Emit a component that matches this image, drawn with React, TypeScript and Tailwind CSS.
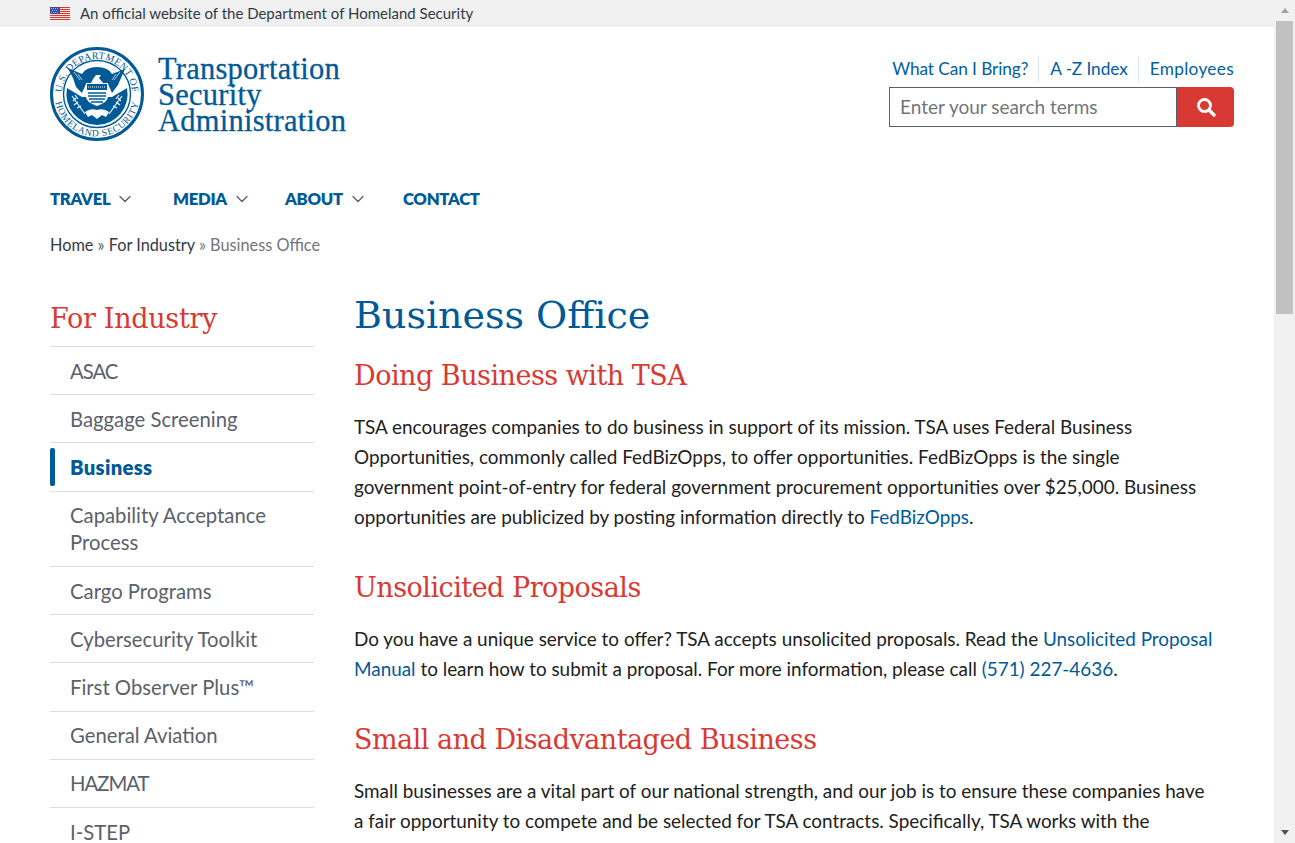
import { ChevronDown } from "lucide-react";

const sans = "font-['Lato','Noto_Sans',sans-serif]";
const serif = "font-['DejaVu_Serif','Liberation_Serif',serif]";

const sideItems = [
  { label: "ASAC", tight: true },
  { label: "Baggage Screening" },
  { label: "Business", active: true },
  { label: "Capability Acceptance Process" },
  { label: "Cargo Programs" },
  { label: "Cybersecurity Toolkit" },
  { label: "First Observer Plus™" },
  { label: "General Aviation" },
  { label: "HAZMAT", tight: true },
  { label: "I-STEP" },
];

const h2Class = `${serif} text-[27px] leading-[36px] tracking-[-0.5px] text-[#d83933]`;

const FlagIcon = () => (
  <svg width="20" height="13" viewBox="0 0 20 13" className="shrink-0">
    <rect width="20" height="13" fill="#fbe3e0" />
    <path d="M0 .5h20M0 2.5h20M0 4.5h20M0 6.5h20M0 8.5h20M0 10.5h20M0 12.5h20" stroke="#d83933" strokeWidth="1" />
    <rect width="10" height="7" fill="#3c4a9e" />
    <path d="M1 1.5h8M2 3.5h6M1 5.5h8" stroke="#c5cbe8" strokeWidth="0.8" strokeDasharray="1 1" />
  </svg>
);

const Seal = () => (
  <svg width="94" height="94" viewBox="0 0 94 94" className="shrink-0">
    <defs>
      <path id="sealTop" d="M12 47 A35 35 0 1 1 82 47" />
      <path id="sealBottom" d="M4.5 47 A42.5 42.5 0 0 0 89.5 47" />
    </defs>
    <circle cx="47" cy="47" r="45.5" fill="#fff" stroke="#005a97" strokeWidth="3" />
    <circle cx="47" cy="47" r="33.5" fill="#fff" stroke="#005a97" strokeWidth="1.4" />
    <text fontFamily="Liberation Serif, serif" fontSize="10" fill="#005a97" letterSpacing="0.3" textAnchor="middle">
      <textPath href="#sealTop" startOffset="50%">U.S. DEPARTMENT OF</textPath>
    </text>
    <text fontFamily="Liberation Serif, serif" fontSize="9.6" fill="#005a97" letterSpacing="0.7" textAnchor="middle">
      <textPath href="#sealBottom" startOffset="50%">HOMELAND SECURITY</textPath>
    </text>
    {/* lower field */}
    <path d="M17 41 A31 31 0 0 0 47 78 A31 31 0 0 0 77 41 L62 50 L32 50 Z" fill="#005a97" />
    {/* wings */}
    <path d="M18 21 L32 27 Q36 20 47 20 Q58 20 62 27 L75 22 L71 31 L68 38 L62 46 L58 37 L36 37 L32 46 L26 40 L23 31 Z" fill="#005a97" />
    <path d="M24 25l6 8M28 27l4 6M70 25l-6 8M66 27l-4 6" stroke="#fff" strokeWidth="0.7" />
    <path d="M43 32 L46 28 L51 28 L49 31 L53 36 L41 36 Z" fill="#fff" />
    {/* shield */}
    <path d="M36 36 H58 V50 Q58 55 47 59 Q36 55 36 50 Z" fill="#fff" />
    <rect x="37" y="37" width="20" height="6" fill="#005a97" />
    <path d="M38 40h18" stroke="#fff" strokeWidth="1" strokeDasharray="1 1" />
    <path d="M38 46h18M38 49h18M39 52h16M41 55h12" stroke="#005a97" strokeWidth="1.3" />
    {/* branches */}
    <path d="M22 49 L35 67M26 51l-3 3M28 55l-4 3M31 59l-4 2M25 48l3 4" stroke="#fff" strokeWidth="1.1" fill="none" />
    <path d="M72 49 L59 67M68 51l3 3M66 55l4 3M63 59l4 2M69 48l-3 4" stroke="#fff" strokeWidth="1.1" fill="none" />
    <path d="M35 65 Q40 61 47 63 Q54 61 59 65 L56 70 L52 68 L47 72 L42 68 L38 70 Z" fill="#fff" />
  </svg>
);

export default function App() {
  return (
    <div className={`flex h-[843px] overflow-hidden bg-white ${sans}`}>
      <div className="w-[1274px] shrink-0 overflow-hidden">
        <div className="flex h-[27px] items-center gap-[10px] bg-[#f0f0f0] pl-[50px] text-[15px] text-[#323a45]">
          <FlagIcon />
          <span>An official website of the Department of Homeland Security</span>
        </div>

        <header className="flex justify-between pl-[50px] pr-[40px] pt-[20px]">
          <a className="flex items-start gap-[14px]">
            <Seal />
            <span className="pt-[9px] font-['Liberation_Serif',serif] text-[30.5px] leading-[26px] tracking-[0.25px] text-[#005a97] [-webkit-text-stroke:0.3px_#005a97]">
              <span className="block">Transportation</span>
              <span className="block">Security</span>
              <span className="block">Administration</span>
            </span>
          </a>
          <div className="flex w-[345px] flex-col items-end pt-[10px]">
            <div className="flex h-[24px] items-center whitespace-nowrap text-[17.3px] text-[#005ea2]">
              <a className="pr-[10px] tracking-[-0.1px]">What Can I Bring?</a>
              <a className="border-l border-[#dce4ef] pl-[11px] pr-[10px] tracking-[-0.1px]">A -Z Index</a>
              <a className="border-l border-[#dce4ef] pl-[11px] tracking-[0.3px]">Employees</a>
            </div>
            <div className="mt-[6px] flex h-[40px] w-full">
              <div className="flex flex-1 items-center border border-[#5b616b] pl-[10px] text-[19px] text-[#71767a]">
                Enter your search terms
              </div>
              <button className="flex w-[57px] items-center justify-center rounded-r-[4px] bg-[#d83933]">
                <svg width="20" height="20" viewBox="0 0 20 20" fill="none" stroke="#fff">
                  <circle cx="8.5" cy="8.5" r="6" strokeWidth="2.8" />
                  <path d="M13 13l5 5" strokeWidth="3.4" strokeLinecap="round" />
                </svg>
              </button>
            </div>
          </div>
        </header>

        <nav className="mt-[46px] flex pl-[50px] text-[16.7px] leading-[24px] font-extrabold tracking-[-0.3px] text-[#005a97]">
          <a className="flex w-[123px] items-center gap-[5px]">
            TRAVEL <ChevronDown size={20} strokeWidth={1.6} className="text-[#5b616b]" />
          </a>
          <a className="flex w-[112px] items-center gap-[5px]">
            MEDIA <ChevronDown size={20} strokeWidth={1.6} className="text-[#5b616b]" />
          </a>
          <a className="flex w-[118px] items-center gap-[5px]">
            ABOUT <ChevronDown size={20} strokeWidth={1.6} className="text-[#5b616b]" />
          </a>
          <a>CONTACT</a>
        </nav>

        <div className="mt-[22px] pl-[50px] text-[16.3px] leading-[24px] text-[#71767a]">
          <a className="text-[#323a45]">Home</a> <span className="text-[#5b616b]">»</span>{" "}
          <a className="text-[#323a45]">For Industry</a> » Business Office
        </div>

        <div className="mt-[32px] flex gap-[40px] pl-[50px] pr-[40px]">
          <aside className="w-[264px] shrink-0">
            <h2 className={`${serif} pb-[9px] pt-[12px] text-[27px] leading-[36px] tracking-[-0.3px] text-[#d83933]`}>For Industry</h2>
            <ul>
              {sideItems.map((item) => (
                <li key={item.label} className="relative border-t border-[#dcdcdc] pb-[9.65px] pl-[20px] pt-[10.6px] text-[20.3px] leading-[27px] text-[#5b616b]">
                  {item.active && <span className="absolute bottom-[5px] left-0 top-[5px] w-[5px] rounded-[2px] bg-[#005a97]" />}
                  <span className={item.active ? "font-extrabold tracking-[0.3px] text-[#005a97]" : item.tight ? "tracking-[-1px]" : ""}>{item.label}</span>
                </li>
              ))}
            </ul>
          </aside>

          <main className="min-w-0 max-w-[861px] flex-1 pt-[1px] text-[18.9px] leading-[30px] text-[#212121]">
            <h1 className={`${serif} text-[38px] leading-[50px] text-[#005a97]`}>Business Office</h1>
            <h2 className={`${h2Class} mt-[18px]`}>Doing Business with TSA</h2>
            <p className="mt-[18px]">
              TSA encourages companies to do business in support of its mission. TSA uses Federal Business Opportunities, commonly called FedBizOpps, to offer opportunities. FedBizOpps is the single government point-of-entry for federal government procurement opportunities over $25,000. Business opportunities are publicized by posting information directly to <a className="text-[#005a97]">FedBizOpps</a>.
            </p>
            <h2 className={`${h2Class} mt-[38px]`}>Unsolicited Proposals</h2>
            <p className="mt-[18px]">
              Do you have a unique service to offer? TSA accepts unsolicited proposals. Read the <a className="text-[#005a97]">Unsolicited Proposal Manual</a> to learn how to submit a proposal. For more information, please call <a className="text-[#005a97]">(571) 227-4636</a>.
            </p>
            <h2 className={`${h2Class} mt-[38px]`}>Small and Disadvantaged Business</h2>
            <p className="mt-[18px]">
              Small businesses are a vital part of our national strength, and our job is to ensure these companies have a fair opportunity to compete and be selected for TSA contracts. Specifically, TSA works with the
            </p>
          </main>
        </div>
      </div>

      <div className="flex w-[21px] shrink-0 flex-col bg-[#f1f1f1]">
        <div className="flex h-[21px] items-center justify-center">
          <div className="h-0 w-0 border-x-[4.5px] border-b-[5px] border-x-transparent border-b-[#a3a3a3]" />
        </div>
        <div className="ml-[2px] h-[293px] w-[17px] bg-[#c1c1c1]" />
        <div className="flex-1" />
        <div className="flex h-[21px] items-center justify-center">
          <div className="h-0 w-0 border-x-[4.5px] border-t-[5px] border-x-transparent border-t-[#505050]" />
        </div>
      </div>
    </div>
  );
}
